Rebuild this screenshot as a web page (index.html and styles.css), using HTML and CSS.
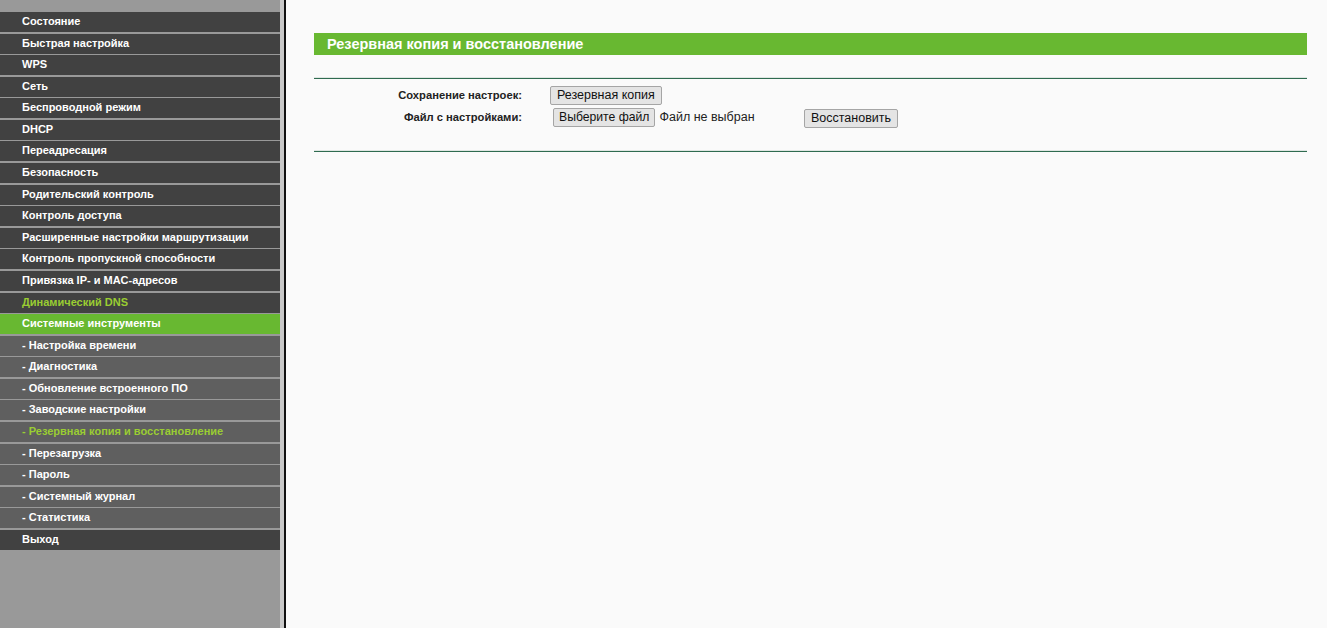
FILE: index.html
```html
<!DOCTYPE html>
<html lang="ru">
<head>
    <meta charset="UTF-8">
    <title>Резервная копия и восстановление</title>
    <link rel="stylesheet" href="styles.css">
</head>
<body>

    <div class="sidebar">
        <ul class="menu">
            <li><a href="#">Состояние</a></li>
            <li><a href="#">Быстрая настройка</a></li>
            <li><a href="#">WPS</a></li>
            <li><a href="#">Сеть</a></li>
            <li><a href="#">Беспроводной режим</a></li>
            <li><a href="#">DHCP</a></li>
            <li><a href="#">Переадресация</a></li>
            <li><a href="#">Безопасность</a></li>
            <li><a href="#">Родительский контроль</a></li>
            <li><a href="#">Контроль доступа</a></li>
            <li><a href="#">Расширенные настройки маршрутизации</a></li>
            <li><a href="#">Контроль пропускной способности</a></li>
            <li><a href="#">Привязка IP- и MAC-адресов</a></li>
            <li><a href="#" class="hl">Динамический DNS</a></li>
            <li class="open"><a href="#">Системные инструменты</a></li>
            <li class="sub"><a href="#">- Настройка времени</a></li>
            <li class="sub"><a href="#">- Диагностика</a></li>
            <li class="sub"><a href="#">- Обновление встроенного ПО</a></li>
            <li class="sub"><a href="#">- Заводские настройки</a></li>
            <li class="sub"><a href="#" class="hl">- Резервная копия и восстановление</a></li>
            <li class="sub"><a href="#">- Перезагрузка</a></li>
            <li class="sub"><a href="#">- Пароль</a></li>
            <li class="sub"><a href="#">- Системный журнал</a></li>
            <li class="sub"><a href="#">- Статистика</a></li>
            <li><a href="#">Выход</a></li>
        </ul>
    </div>

    <div class="main">
        <div class="title">Резервная копия и восстановление</div>
        <div class="rule"></div>

        <div class="form">
            <div class="label">Сохранение настроек:</div>
            <div class="field wide">
                <button class="btn">Резервная копия</button>
            </div>

            <div class="label">Файл с настройками:</div>
            <div class="field file">
                <button class="btn pick">Выберите файл</button>
                <span class="file-name">Файл не выбран</span>
            </div>
            <div class="field">
                <button class="btn restore">Восстановить</button>
            </div>
        </div>

        <div class="rule"></div>
    </div>

</body>
</html>
```

FILE: styles.css
```css
body {
    margin: 0;
    display: flex;
    height: 100vh;
    font-family: "Liberation Sans", Arial, sans-serif;
    background-color: #fafafa;
}
.sidebar {
    width: 280px;
    flex-shrink: 0;
    background: #999999;
    border-right: 4px solid #c8c8c8;
    padding-top: 12px;
}
.menu {
    list-style: none;
    margin: 0;
    padding: 0;
}
.menu li {
    background: #414141;
    height: 20px;
    margin-bottom: 1.58px;
}
.menu li.sub {
    background: #5f5f5f;
}
.menu li.open {
    background: #68b831;
}
.menu a {
    display: block;
    padding-left: 22px;
    line-height: 19px;
    color: white;
    text-decoration: none;
    font-size: 11px;
    font-weight: bold;
}
.menu a.hl {
    color: #9acd32;
}
.main {
    flex: 1;
    border-left: 2px solid #111;
    padding: 33px 20px 0 28px;
}
.title {
    background: #68b831;
    height: 22px;
    line-height: 22px;
    padding-left: 13px;
    color: white;
    font-size: 14.5px;
    font-weight: bold;
    margin-bottom: 22px;
}
.rule {
    height: 1px;
    background: #2f6b50;
    border-top: 1px solid #dfe6e2;
}
.form {
    display: grid;
    grid-template-columns: 236px 254px auto;
    row-gap: 2px;
    align-items: center;
    padding: 6px 0 22px;
}
.label {
    text-align: right;
    font-size: 11.2px;
    font-weight: bold;
    color: #222;
    padding-right: 28px;
}
.field.wide {
    grid-column: 2 / 4;
}
.field.file {
    padding-left: 3px;
    display: flex;
    align-items: center;
    gap: 4px;
}
.file-name {
    font-size: 12.5px;
    color: #222;
}
.btn {
    font-family: "Liberation Sans", Arial, sans-serif;
    font-size: 12.5px;
    color: #111;
    background: #e4e4e4;
    border: 1px solid #a5a5a5;
    border-radius: 2px;
    padding: 1px 6px;
    height: 19px;
    cursor: pointer;
}
.pick {
    padding: 1px 5px;
    font-size: 12.2px;
}
.restore {
    margin-top: 2px;
}
```
